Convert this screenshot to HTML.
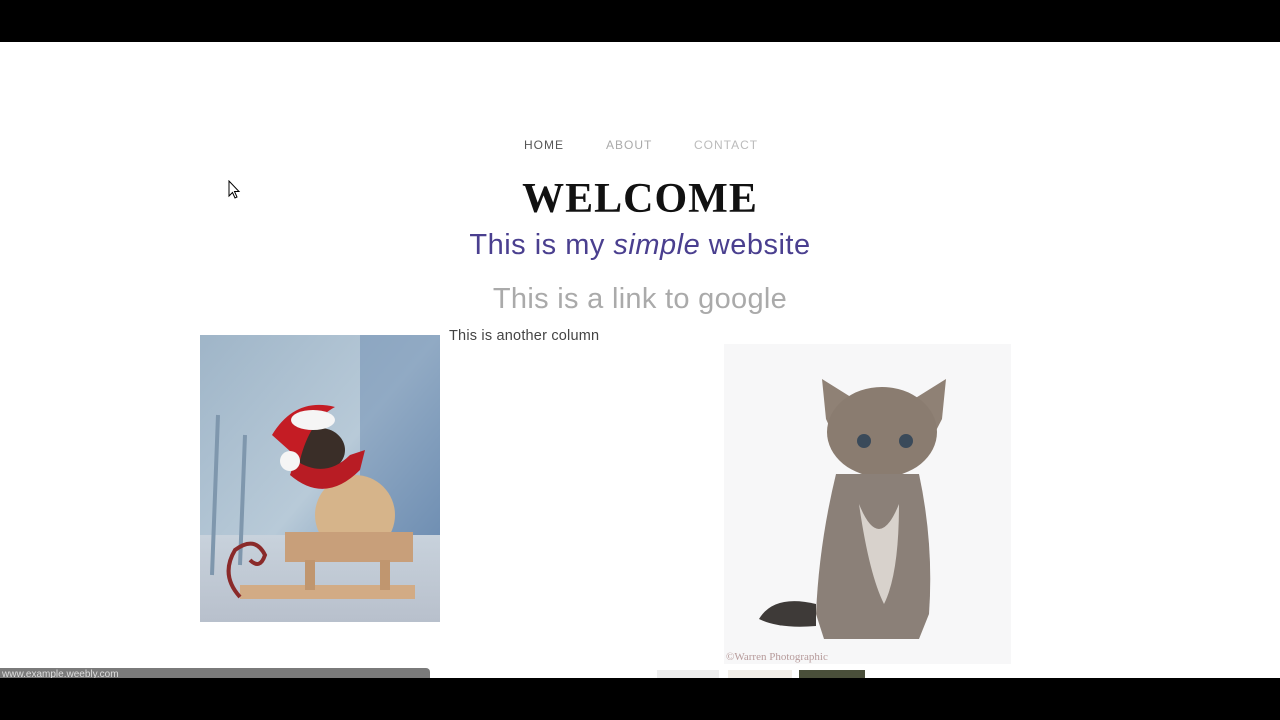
<!DOCTYPE html>
<html><head><meta charset="utf-8"><style>
html,body{margin:0;padding:0;width:1280px;height:720px;overflow:hidden;background:#000;font-family:"Liberation Sans",sans-serif}
.page{position:absolute;left:0;top:42px;width:1280px;height:636px;background:#fff;overflow:hidden}
.nav{position:absolute;top:96px;left:0;width:1280px;text-align:center;font-size:12px;letter-spacing:1px}
.nav span{position:absolute;top:0}
h1{position:absolute;top:132px;left:0;width:1280px;text-align:center;margin:0;font-family:"Liberation Serif",serif;font-size:42px;font-weight:bold;letter-spacing:1px;color:#111;line-height:50px}
.sub{position:absolute;top:185px;left:0;width:1280px;text-align:center;font-size:29px;color:#4a3f8f;line-height:36px;letter-spacing:.5px}
.link{position:absolute;top:239px;left:0;width:1280px;text-align:center;font-size:29px;color:#aaa;line-height:36px;letter-spacing:.3px}
.col{position:absolute;left:449px;top:286px;font-size:14.5px;color:#444;letter-spacing:.2px}
</style></head><body>
<div class="page">
<div class="nav"><span style="left:524px;color:#555">HOME</span><span style="left:606px;color:#aaa">ABOUT</span><span style="left:694px;color:#bbb">CONTACT</span></div>
<svg style="position:absolute;left:228px;top:138px" width="14" height="20" viewBox="0 0 14 20"><path d="M1 1 L1 16 L4.5 12.5 L7 18 L9 17 L6.5 11.5 L11 11.5 Z" fill="#fff" stroke="#000" stroke-width="1"/></svg>
<h1>WELCOME</h1>
<div class="sub">This is my <i>simple</i> website</div>
<div class="link">This is a link to google</div>
<div class="col">This is another column</div>
<svg style="position:absolute;left:200px;top:293px" width="240" height="287" viewBox="0 0 240 287">
<defs><linearGradient id="bg" x1="0" y1="0" x2="1" y2="1"><stop offset="0" stop-color="#9fb5c8"/><stop offset=".5" stop-color="#b8cad8"/><stop offset="1" stop-color="#5a7ea8"/></linearGradient>
<linearGradient id="fl" x1="0" y1="0" x2="0" y2="1"><stop offset="0" stop-color="#c8d2dc"/><stop offset="1" stop-color="#b8c0cc"/></linearGradient></defs>
<rect width="240" height="287" fill="url(#bg)"/>
<rect x="160" y="0" width="80" height="200" fill="#6a8ab0" opacity=".5"/>
<rect y="200" width="240" height="87" fill="url(#fl)"/>
<path d="M12 240 L18 80 M40 230 L45 100" stroke="#7f97ad" stroke-width="4"/>
<ellipse cx="155" cy="180" rx="40" ry="40" fill="#d6b48a"/>
<ellipse cx="120" cy="115" rx="25" ry="22" fill="#3a2e28"/>
<path d="M90 140 Q125 170 160 135 L165 115 L150 120 Q125 145 95 125 Z" fill="#b81c24"/>
<path d="M72 100 Q95 62 135 72 Q110 85 100 125 Z" fill="#c41c24"/>
<ellipse cx="113" cy="85" rx="22" ry="10" fill="#f5f5f5"/>
<circle cx="90" cy="126" r="10" fill="#f5f5f5"/>
<rect x="85" y="197" width="128" height="30" fill="#c89f7a"/>
<rect x="40" y="250" width="175" height="14" fill="#d2ab85"/>
<rect x="105" y="225" width="10" height="30" fill="#c0966f"/><rect x="180" y="225" width="10" height="30" fill="#c0966f"/>
<path d="M40 262 Q20 240 35 215 Q55 200 65 220 Q60 235 50 225" stroke="#8a2a2a" stroke-width="4" fill="none"/>
</svg>
<svg style="position:absolute;left:724px;top:302px" width="287" height="320" viewBox="0 0 287 320">
<rect width="287" height="320" fill="#f7f7f8"/>
<path d="M98 35 L102 75 L118 110 L200 110 L218 75 L222 35 L190 55 L130 55 Z" fill="#8f8175"/>
<ellipse cx="158" cy="88" rx="55" ry="45" fill="#8a7c70"/>
<circle cx="140" cy="97" r="7" fill="#3a4a5a"/><circle cx="182" cy="97" r="7" fill="#3a4a5a"/>
<path d="M112 130 Q95 200 92 270 L100 295 L195 295 L205 270 Q210 200 195 130 Z" fill="#8b8078"/>
<path d="M135 160 Q155 210 175 160 Q175 230 160 260 Q145 230 135 160 Z" fill="#d8d2cc"/>
<path d="M92 260 Q50 250 35 275 Q55 285 92 282 Z" fill="#3e3a38"/>
<text x="2" y="316" font-family="Liberation Serif,serif" font-size="11" fill="#b69a9a">©Warren Photographic</text>
</svg>
<div style="position:absolute;left:0;top:626px;width:428px;height:12px;background:#7a7a7a;border-radius:0 4px 0 0;color:#ddd;font-size:10px;line-height:14px;padding-left:2px">www.example.weebly.com</div>
<div style="position:absolute;left:657px;top:628px;width:62px;height:10px;background:#eee"></div>
<div style="position:absolute;left:728px;top:628px;width:64px;height:10px;background:#f2eee8"></div>
<div style="position:absolute;left:799px;top:628px;width:66px;height:10px;background:#4a4f3a"></div>
</div>
</body></html>
